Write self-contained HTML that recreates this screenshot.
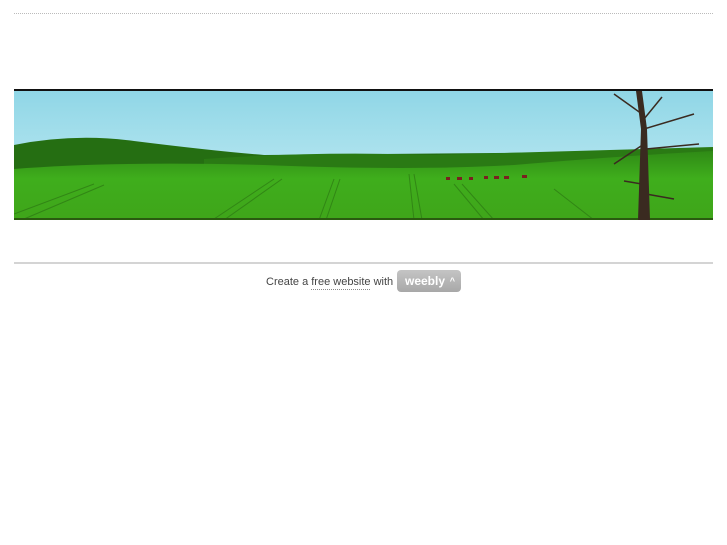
<!DOCTYPE html>
<html><head><style>
body{margin:0;background:#fff;width:727px;height:545px;position:relative;font-family:"Liberation Sans",sans-serif;}
.dot{position:absolute;left:14px;top:13px;width:699px;border-top:1px dotted #bbb;}
.ban{position:absolute;left:14px;top:89px;width:699px;height:131px;}
.gl{position:absolute;left:14px;top:262px;width:699px;height:2px;background:#d4d4d4;}
.ft{position:absolute;top:276px;left:266px;font-size:11px;color:#444;}
.wb{position:absolute;left:397px;top:270px;width:64px;height:22px;background:linear-gradient(#c4c4c4,#a8a8a8);border-radius:4px;color:#fff;font-weight:bold;font-size:12px;line-height:22px;}
</style></head><body>
<div class="dot"></div>
<svg class="ban" viewBox="0 0 699 131" preserveAspectRatio="none">
<defs>
<linearGradient id="s" x1="0" y1="0" x2="0" y2="1"><stop offset="0" stop-color="#8fd6e6"/><stop offset="1" stop-color="#c8eef5"/></linearGradient>
<linearGradient id="g" x1="0" y1="0" x2="0" y2="1"><stop offset="0" stop-color="#2f8a16"/><stop offset="0.4" stop-color="#3fae1c"/><stop offset="1" stop-color="#3fa51a"/></linearGradient>
</defs>
<rect width="699" height="131" fill="url(#s)"/>
<rect width="699" height="2" fill="#111"/>
<path d="M0 56 Q60 44 120 52 Q200 62 250 66 L699 62 L699 131 L0 131Z" fill="#256e12"/>
<path d="M190 70 Q300 62 420 66 Q560 62 699 58 L699 90 L190 90Z" fill="#2a7a14"/>
<path d="M0 80 Q100 72 250 76 Q400 82 500 76 Q620 66 699 62 L699 131 L0 131Z" fill="url(#g)"/>
<g stroke="#2e7d14" stroke-width="1" fill="none" opacity="0.8">
<path d="M0 125 L80 95 M10 130 L90 96 M200 130 L260 90 M210 131 L268 90 M305 131 L320 90 M312 131 L326 90 M400 131 L395 85 M408 131 L400 85 M470 131 L440 95 M480 131 L448 95 M580 131 L540 100"/>
</g>
<rect y="129" width="699" height="2" fill="#2a5a10"/>
<g fill="#7a2020"><rect x="432" y="88" width="4" height="3"/><rect x="443" y="88" width="5" height="3"/><rect x="455" y="88" width="4" height="3"/><rect x="470" y="87" width="4" height="3"/><rect x="480" y="87" width="5" height="3"/><rect x="490" y="87" width="5" height="3"/><rect x="508" y="86" width="5" height="3"/></g>
<path d="M624 131 L627 40 L622 2 L628 2 L633 40 L636 131Z" fill="#3a2a20"/>
<g stroke="#3a2a20" stroke-width="1.5" fill="none"><path d="M630 40 L680 25 M630 55 L600 75 M632 60 L685 55 M628 95 L610 92 M632 105 L660 110 M628 25 L600 5 M630 30 L648 8"/></g>
</svg>
<div class="gl"></div>
<div class="ft">Create a free website with <span style="position:absolute;left:45px;top:13px;width:59px;border-bottom:1px dotted #888"></span></div>
<div class="wb"><span style="margin-left:8px">weebly</span><span style="position:absolute;right:6px;font-size:9px">^</span></div>
</body></html>
